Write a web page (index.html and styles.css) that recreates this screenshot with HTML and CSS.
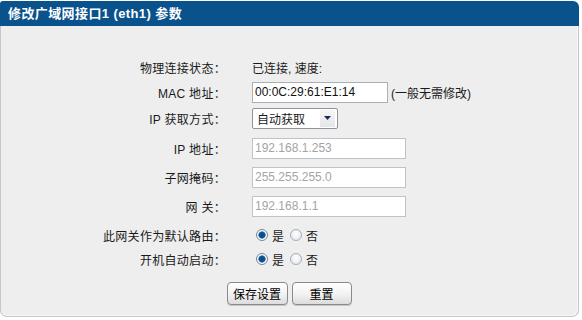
FILE: index.html
```html
<!DOCTYPE html>
<html lang="zh-CN">
<head>
<meta charset="utf-8">
<title>修改广域网接口1 (eth1) 参数</title>
<link rel="stylesheet" href="styles.css">
</head>
<body>
<div class="panel">
  <div class="panel-head">修改广域网接口1 (eth1) 参数</div>
  <div class="panel-body">
    <div class="form">
      <div class="label r1">物理连接状态：</div>
      <div class="value r1">已连接, 速度:</div>

      <div class="label r2">MAC 地址：</div>
      <div class="value r2"><span class="input mac">00:0C:29:61:E1:14</span><span class="hint">(一般无需修改)</span></div>

      <div class="label r3">IP 获取方式：</div>
      <div class="value r3"><span class="select"><span class="select-text">自动获取</span><span class="select-btn"><svg width="7" height="4" viewBox="0 0 7 4"><path d="M0 0h7L3.5 4z" fill="#1a2a5a"/></svg></span></span></div>

      <div class="label r4">IP 地址：</div>
      <div class="value r4"><span class="input dis">192.168.1.253</span></div>

      <div class="label r5">子网掩码：</div>
      <div class="value r5"><span class="input dis">255.255.255.0</span></div>

      <div class="label r6">网 关：</div>
      <div class="value r6"><span class="input dis">192.168.1.1</span></div>

      <div class="label r7">此网关作为默认路由：</div>
      <div class="value r7"><span class="radio on"></span><span class="rlabel">是</span><span class="radio second"></span><span class="rlabel">否</span></div>

      <div class="label r8">开机自动启动：</div>
      <div class="value r8"><span class="radio on"></span><span class="rlabel">是</span><span class="radio second"></span><span class="rlabel">否</span></div>
    </div>
    <div class="buttons">
      <span class="btn save">保存设置</span>
      <span class="btn reset">重置</span>
    </div>
  </div>
</div>
</body>
</html>
```
FILE: styles.css
```css
* { box-sizing: border-box; }
html, body { margin: 0; padding: 0; background: #ffffff; }
body {
  font-family: "Liberation Sans", "Noto Sans CJK SC", sans-serif;
  font-size: 12px;
  color: #1a1a1a;
}
.panel {
  width: 579px;
  margin-top: 1px;
}
.panel-head {
  height: 25px;
  background: #0a528c;
  color: #ffffff;
  font-weight: bold;
  font-size: 13px;
  line-height: 25px;
  padding-left: 8px;
  letter-spacing: 0.4px;
  border-radius: 3px 6px 0 0;
}
.panel-body {
  height: 291px;
  background: #eeeeee;
  border: 1px solid #c6c6c6;
  border-top: none;
  border-radius: 0 0 7px 7px;
  box-shadow: inset -1px -1px 0 #f8f8f8;
  padding-top: 28px;
}
.form {
  display: grid;
  grid-template-columns: 225px 1fr;
  column-gap: 26px;
  grid-template-rows: 26px 24px 28px 32px 26px 32px 26px 22px;
}
.label {
  text-align: right;
  display: flex;
  align-items: center;
  justify-content: flex-end;
  letter-spacing: 0.3px;
}
.value {
  display: flex;
  align-items: center;
}
.input {
  display: inline-block;
  height: 21px;
  line-height: 19px;
  background: #ffffff;
  border: 1px solid #a9b0b8;
  padding-left: 2px;
}
.mac { width: 136px; color: #111; }
.hint { margin-left: 3px; }
.dis {
  width: 154px;
  color: #a4a4a4;
  border-color: #bfc3c8;
}
.select {
  display: inline-flex;
  align-items: center;
  width: 86px;
  height: 21px;
  background: #ffffff;
  border: 1px solid #8d949c;
  border-radius: 2px;
  padding-left: 4px;
}
.select-text { flex: 1; }
.select-btn {
  width: 15px;
  height: 17px;
  margin-right: 2px;
  background: linear-gradient(#f6f6f6, #e4e6ea);
  display: flex;
  align-items: center;
  justify-content: center;
}
.radio {
  display: inline-block;
  width: 12px;
  height: 12px;
  border-radius: 50%;
  border: 1px solid #a8aeb6;
  background: radial-gradient(circle at 50% 40%, #ffffff, #dde1e6);
  margin-left: 4px;
}
.radio.second { margin-left: 6px; }
.radio.on {
  background: radial-gradient(circle, #0a4f8c 0 2.6px, #3d86c4 3.4px, #ffffff 4px, #e6e9ed);
  border-color: #7a8592;
}
.rlabel { margin-left: 4px; }
.buttons {
  display: flex;
  justify-content: center;
  gap: 4px;
  padding-top: 12px;
  padding-right: 1px;
}
.btn {
  display: inline-flex;
  align-items: center;
  justify-content: center;
  height: 23px;
  border: 1px solid #8a8a8a;
  border-radius: 4px;
  background: linear-gradient(#ffffff, #f3f3f3 50%, #dcdcdc);
  box-shadow: 0 1px 0 #c8c8c8;
  font-size: 12px;
  color: #000;
}
.save { width: 61px; }
.reset { width: 60px; }
```
